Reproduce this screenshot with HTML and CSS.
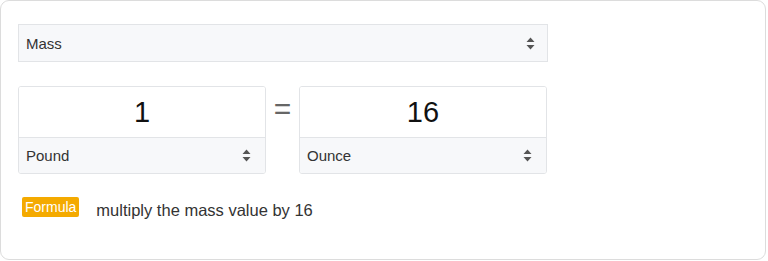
FILE: index.html
```html
<!DOCTYPE html>
<html lang="en">
<head>
  <meta charset="UTF-8">
  <title>Mass Converter</title>
  <meta name="viewport" content="width=device-width, initial-scale=1.0" />
  <link rel="stylesheet" href="styles.css">
</head>
<body>

  <!-- Converter Card -->
  <div class="card">
    <div class="select category">
      <span>Mass</span>
      <svg class="arrows" width="9" height="13" viewBox="0 0 9 13"><path d="M4.5 0.5 L8.5 5 H0.5 Z M4.5 12.5 L8.5 8 H0.5 Z" fill="#555"/></svg>
    </div>

    <div class="convert-row">
      <div class="unit-box">
        <div class="value">1</div>
        <div class="select unit">
          <span>Pound</span>
          <svg class="arrows" width="9" height="13" viewBox="0 0 9 13"><path d="M4.5 0.5 L8.5 5 H0.5 Z M4.5 12.5 L8.5 8 H0.5 Z" fill="#555"/></svg>
        </div>
      </div>

      <div class="equals">=</div>

      <div class="unit-box">
        <div class="value">16</div>
        <div class="select unit">
          <span>Ounce</span>
          <svg class="arrows" width="9" height="13" viewBox="0 0 9 13"><path d="M4.5 0.5 L8.5 5 H0.5 Z M4.5 12.5 L8.5 8 H0.5 Z" fill="#555"/></svg>
        </div>
      </div>
    </div>

    <div class="formula">
      <span class="badge">Formula</span>
      <span class="formula-text">multiply the mass value by 16</span>
    </div>
  </div>

</body>
</html>
```

FILE: styles.css
```css
* { box-sizing: border-box; }

body {
  font-family: "Liberation Sans", Arial, sans-serif;
  background-color: #fff;
  color: #333;
  margin: 0;
  padding: 0;
}

/* Card */
.card {
  width: 766px;
  height: 260px;
  border: 1px solid #dcdcdc;
  border-radius: 9px;
  padding: 23px 17px 0;
}

/* Select look-alike */
.select {
  display: flex;
  align-items: center;
  justify-content: space-between;
  background-color: #f7f8fa;
  font-size: 15px;
  color: #333;
  padding: 0 12px 0 7px;
}

.category {
  width: 530px;
  height: 38px;
  border: 1px solid #e2e4e7;
}

.arrows { display: block; }

/* Conversion row */
.convert-row {
  display: flex;
  align-items: flex-start;
  margin-top: 24px;
}

.unit-box {
  width: 248px;
  border: 1px solid #e2e4e7;
  border-radius: 3px;
  overflow: hidden;
}

.value {
  height: 50px;
  display: flex;
  align-items: center;
  justify-content: center;
  font-size: 29px;
  color: #111;
  background-color: #fff;
}

.unit {
  height: 36px;
  border-top: 1px solid #e2e4e7;
  padding-right: 14px;
}

.equals {
  width: 33px;
  text-align: center;
  font-size: 30px;
  line-height: 30px;
  color: #666;
  margin-top: 8px;
}

/* Formula */
.formula {
  display: flex;
  align-items: flex-start;
  margin-top: 23px;
  padding-left: 4px;
}

.badge {
  background-color: #f4aa00;
  color: #fff;
  font-size: 14px;
  height: 20px;
  line-height: 20px;
  padding: 0 3px;
  border-radius: 2px;
}

.formula-text {
  margin: 4px 0 0 17px;
  font-size: 16.5px;
  color: #333;
}
```
